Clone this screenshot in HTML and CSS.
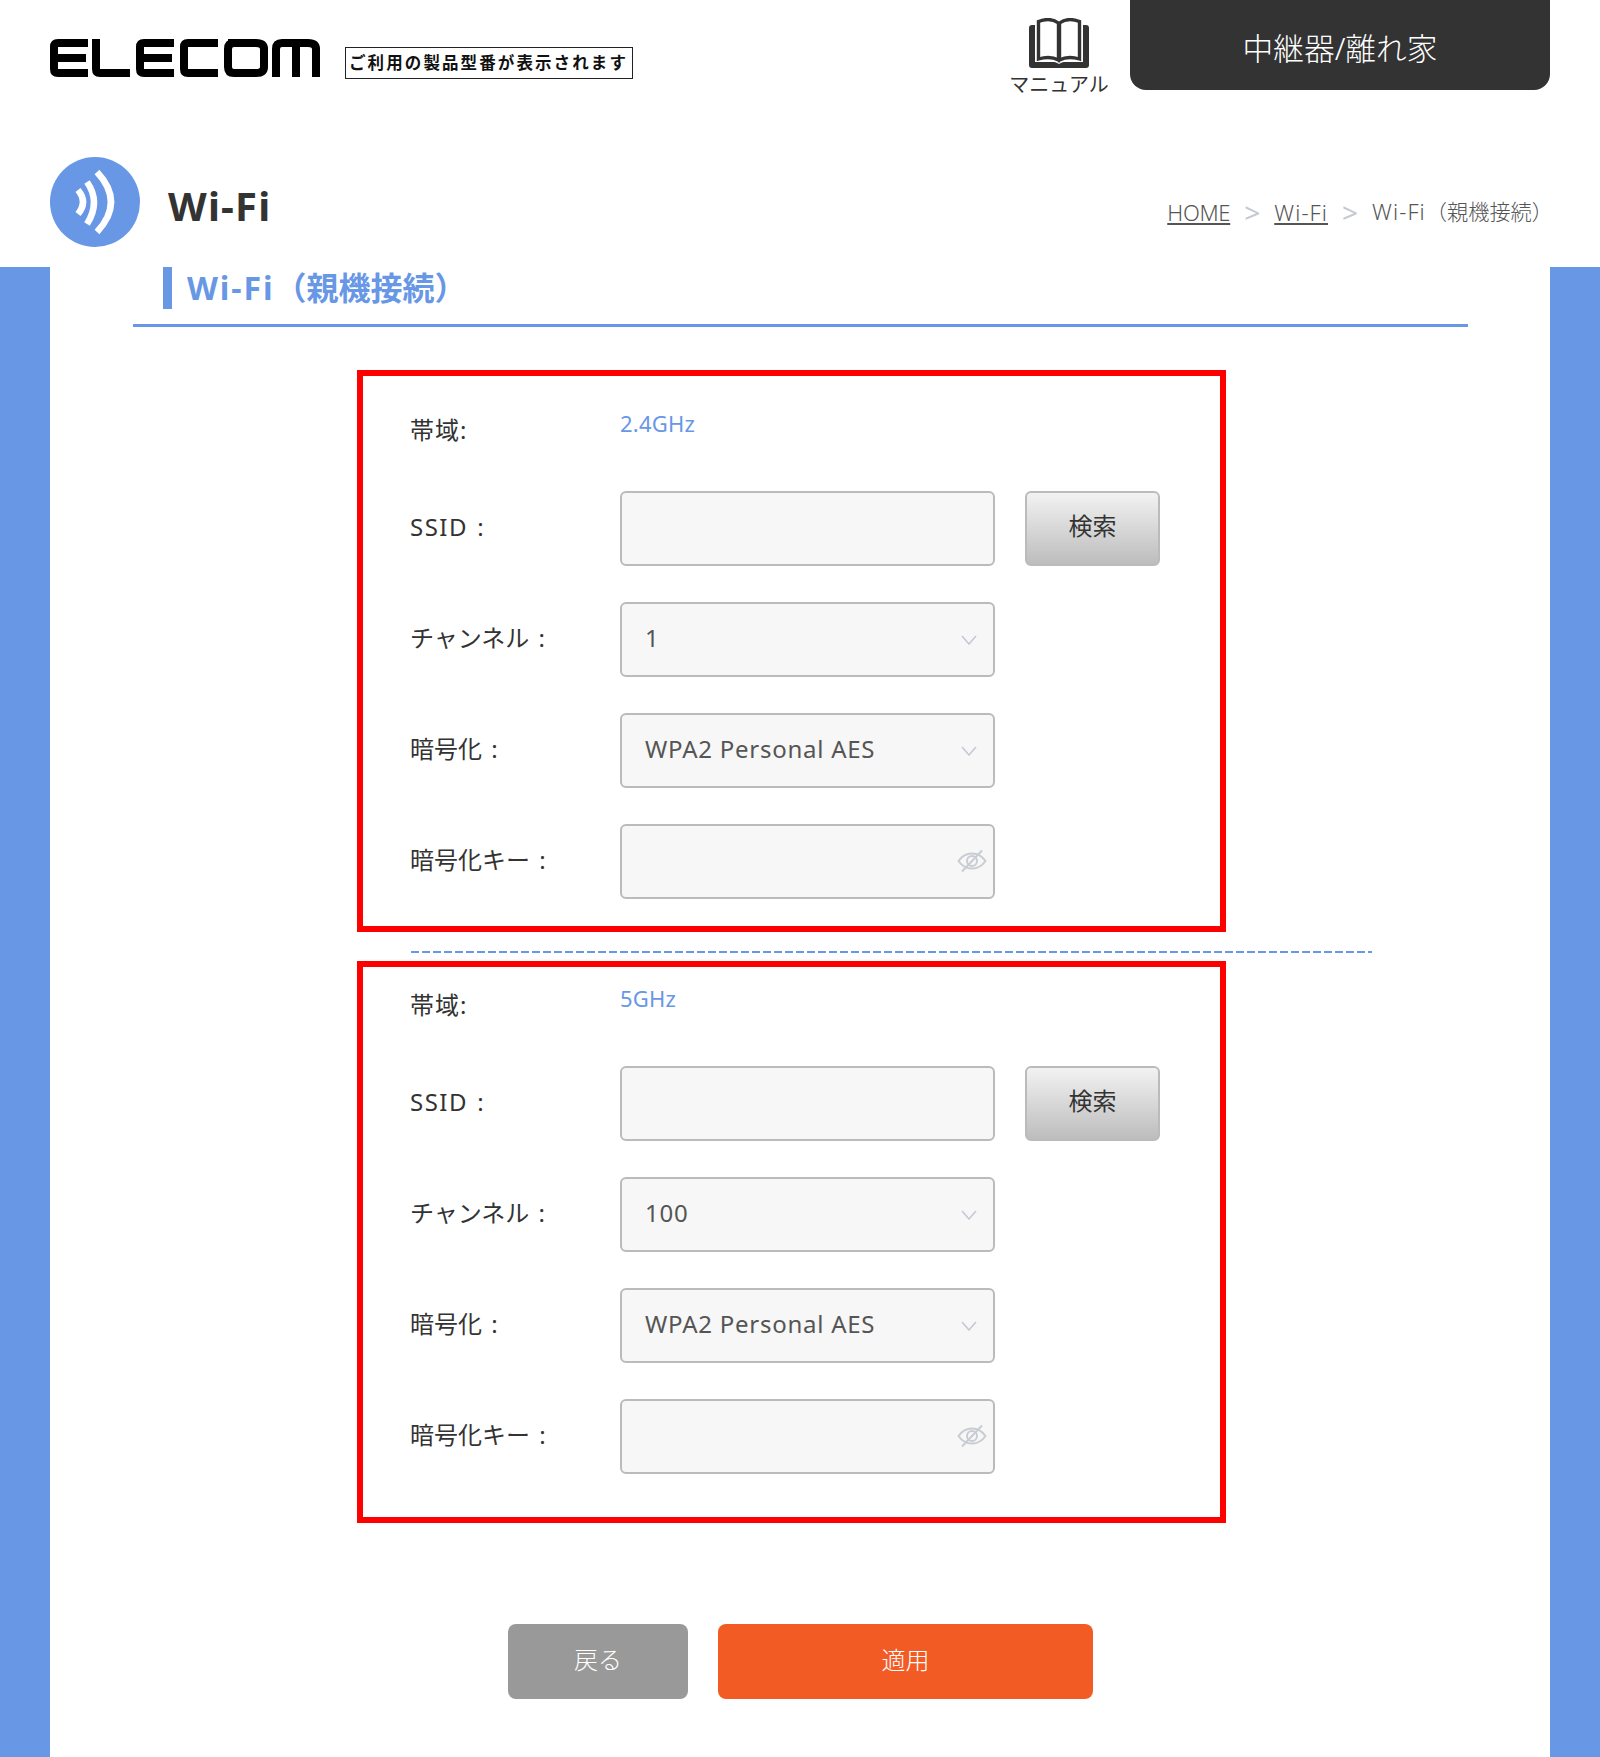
FILE: index.html
```html
<!DOCTYPE html>
<html lang="ja">
<head>
<meta charset="utf-8">
<title>Wi-Fi</title>
<link rel="stylesheet" href="styles.css">
</head>
<body>
<header class="site-header">
  <div class="brand">
    <svg class="logo" viewBox="0 0 270 38" aria-label="ELECOM">
      <g fill="none" stroke="#000" stroke-width="8">
        <path d="M38 4H8Q4 4 4 8V30Q4 34 8 34H38"/>
        <path d="M4 19H36"/>
        <path d="M46 0V30Q46 34 50 34H80"/>
        <path d="M124 4H94Q90 4 90 8V30Q90 34 94 34H124"/>
        <path d="M90 19H122"/>
        <path d="M168 4H138Q134 4 134 8V30Q134 34 138 34H168"/>
        <path d="M178 4H206Q214 4 214 10V28Q214 34 206 34H184Q178 34 178 28V10Q178 4 184 4Z"/>
        <path d="M226 38V10Q226 4 232 4H258Q266 4 266 10V38"/>
        <path d="M246 4V38"/>
      </g>
    </svg>
    <div class="model">ご利用の製品型番が表示されます</div>
  </div>
  <div class="header-right">
    <a class="manual">
      <svg class="book" viewBox="0 0 60 50">
        <path fill="#333" d="M3 7H6V44H25C27 44 28 45 30 46C32 45 33 44 35 44H54V7H57C59 7 60 8 60 10V47C60 49 59 50 57 50H3C1 50 0 49 0 47V10C0 8 1 7 3 7Z"/>
        <path fill="none" stroke="#333" stroke-width="3.4" d="M9.500 3.500C16 1 24 1 29.500 5V42C24 39 16 39 9.500 41ZM50.500 3.500C44 1 36 1 30.500 5V42C36 39 44 39 50.500 41Z"/>
      </svg>
      <span class="manual-label">マニュアル</span>
    </a>
    <div class="mode">中継器/離れ家</div>
  </div>
</header>

<section class="title-row">
  <div class="title-left">
    <svg class="wifi-icon" viewBox="0 0 90 90">
      <circle cx="45" cy="45" r="45" fill="#6897e6"/>
      <g fill="none" stroke="#fff" stroke-width="6.500">
        <path d="M28 33Q38 45 28 57"/>
        <path d="M37 25Q51 45 37 67"/>
        <path d="M47 15Q75 45 47 75"/>
      </g>
    </svg>
    <h1 class="page-title">Wi-Fi</h1>
  </div>
  <nav class="crumbs">
    <a class="crumb-link crumb-home">HOME</a><span class="crumb-sep">&gt;</span><a class="crumb-link crumb-latin">Wi-Fi</a><span class="crumb-sep">&gt;</span><span><span class="crumb-latin">Wi-Fi</span><span class="crumb-jp">（親機接続）</span></span>
  </nav>
</section>

<main class="stage">
  <div class="sheet">
    <div class="section-head">
      <h2 class="section-title"><span class="title-latin">Wi-Fi</span>（親機接続）</h2>
    </div>

    <section class="band-box">
      <div class="row row-band"><span class="label">帯域:</span><span class="band">2.4GHz</span></div>
      <div class="row"><span class="label"><span class="label-latin">SSID</span> :</span><input class="field" type="text"><button class="search" type="button">検索</button></div>
      <div class="row"><span class="label">チャンネル :</span><div class="field select">1<svg class="chev" viewBox="0 0 16 10"><path d="M1 1L8 9L15 1"/></svg></div></div>
      <div class="row"><span class="label">暗号化 :</span><div class="field select">WPA2 Personal AES<svg class="chev" viewBox="0 0 16 10"><path d="M1 1L8 9L15 1"/></svg></div></div>
      <div class="row"><span class="label">暗号化キー :</span><div class="field select"><svg class="eye" viewBox="0 0 30 24"><path d="M1.500 12C5 7 9.500 4.500 15 4.500S25 7 28.500 12C25 17 20.500 19.500 15 19.500S5 17 1.500 12Z"/><circle cx="15" cy="12" r="5"/><path d="M5 22.500L25 1.500"/></svg></div></div>
    </section>

    <div class="divider"></div>

    <section class="band-box band-box-second">
      <div class="row row-band"><span class="label">帯域:</span><span class="band">5GHz</span></div>
      <div class="row"><span class="label"><span class="label-latin">SSID</span> :</span><input class="field" type="text"><button class="search" type="button">検索</button></div>
      <div class="row"><span class="label">チャンネル :</span><div class="field select">100<svg class="chev" viewBox="0 0 16 10"><path d="M1 1L8 9L15 1"/></svg></div></div>
      <div class="row"><span class="label">暗号化 :</span><div class="field select">WPA2 Personal AES<svg class="chev" viewBox="0 0 16 10"><path d="M1 1L8 9L15 1"/></svg></div></div>
      <div class="row"><span class="label">暗号化キー :</span><div class="field select"><svg class="eye" viewBox="0 0 30 24"><path d="M1.500 12C5 7 9.500 4.500 15 4.500S25 7 28.500 12C25 17 20.500 19.500 15 19.500S5 17 1.500 12Z"/><circle cx="15" cy="12" r="5"/><path d="M5 22.500L25 1.500"/></svg></div></div>
    </section>

    <div class="actions">
      <button class="btn btn-back" type="button">戻る</button>
      <button class="btn btn-apply" type="button">適用</button>
    </div>
  </div>
</main>
</body>
</html>
```
FILE: styles.css
```css
* { box-sizing: border-box; }
html, body { margin: 0; padding: 0; }
body {
  width: 1600px;
  height: 1757px;
  overflow: hidden;
  background: #fff;
  color: #333;
  font-family: "Noto Sans", "Noto Sans CJK JP", sans-serif;
  font-weight: 300;
}

/* header */
.site-header {
  display: flex;
  justify-content: space-between;
  align-items: flex-start;
  height: 157px;
  padding: 0 50px;
}
.brand {
  display: flex;
  align-items: flex-start;
  gap: 25px;
  padding-top: 39px;
}
.logo { display: block; width: 270px; height: 38px; }
.model {
  width: 288px;
  height: 32px;
  margin-top: 8px;
  border: 1.500px solid #222;
  color: #111;
  font-family: "Noto Sans CJK JP", sans-serif;
  font-size: 16.500px;
  font-weight: 700;
  line-height: 28px;
  letter-spacing: 2.100px;
  white-space: nowrap;
  padding-left: 3px;
  overflow: hidden;
}
.header-right { display: flex; align-items: flex-start; gap: 22px; }
.manual {
  display: flex;
  flex-direction: column;
  align-items: center;
  width: 98px;
  padding-top: 18px;
}
.book { display: block; width: 60px; height: 50px; }
.manual-label {
  font-size: 20px;
  font-weight: 400;
  line-height: 28px;
  margin-top: 3px;
  white-space: nowrap;
}
.mode {
  width: 420px;
  height: 90px;
  background: #333;
  color: #fff;
  border-radius: 0 0 16px 16px;
  font-size: 30.700px;
  line-height: 96px;
  text-align: center;
}

/* page title */
.title-row {
  display: flex;
  justify-content: space-between;
  align-items: flex-start;
  height: 110px;
  padding: 0 47px 0 50px;
}
.title-left { display: flex; align-items: center; gap: 28px; }
.wifi-icon { display: block; width: 90px; height: 90px; }
.page-title {
  margin: 8px 0 0;
  font-size: 40px;
  font-weight: 700;
  line-height: 56px;
  letter-spacing: 1.200px;
  color: #333;
}
.crumbs {
  display: flex;
  align-items: center;
  padding-top: 37px;
  font-size: 22px;
  line-height: 34px;
  color: #555;
}
.crumb-link { text-decoration: underline; }
.crumb-home { letter-spacing: -0.300px; }
.crumb-latin { letter-spacing: 1.100px; }
.crumb-jp { font-size: 21.200px; }
.crumb-sep { color: #c3c8d2; margin: 0 14px; font-size: 28px; font-weight: 400; }

/* main */
.stage {
  height: 1490px;
  padding: 0 50px;
  background: #6897e6;
}
.sheet {
  height: 100%;
  background: #fff;
}
.section-head {
  margin: 0 82px 0 83px;
  height: 60px;
  border-bottom: 3px solid #6897e6;
  padding-left: 30px;
}
.section-title {
  margin: 0;
  height: 42px;
  border-left: 9px solid #6897e6;
  padding-left: 15px;
  color: #6897e6;
  font-size: 32px;
  font-weight: 700;
  line-height: 42px;
  white-space: nowrap;
}
.title-latin { letter-spacing: 1.900px; }

.band-box {
  width: 869px;
  height: 562px;
  margin: 43px 0 0 307px;
  padding: 0 47px;
  border: 6px solid #f00;
}
.band-box-second { margin-top: 0; }
.band-box-second .row-band { margin-top: 14px; }
.divider {
  width: 961px;
  height: 2px;
  margin: 19px 0 8px 361px;
  background: repeating-linear-gradient(90deg, #6897e6 0 8px, transparent 8px 11px);
}
.row {
  display: flex;
  align-items: center;
  height: 74px;
  margin-bottom: 37px;
}
.row-band {
  height: 37px;
  margin-top: 30px;
  margin-bottom: 48px;
  align-items: flex-start;
}
.label {
  width: 210px;
  flex: none;
  font-size: 24px;
  font-weight: 400;
  line-height: 34px;
  word-spacing: 3px;
  color: #333;
  margin-top: -3px;
  white-space: pre;
}
.label-latin { letter-spacing: 1.500px; }
.row-band .label { margin-top: 7px; letter-spacing: 1px; }
.band {
  margin-top: 1px;
  font-size: 22px;
  font-weight: 400;
  line-height: 32px;
  letter-spacing: 0.200px;
  color: #6897e6;
}
.field {
  flex: none;
  width: 375px;
  height: 75px;
  border: 2px solid #bbb;
  border-radius: 6px;
  background: #f7f7f7;
  padding: 0 23px;
}
.select {
  display: flex;
  align-items: center;
  justify-content: space-between;
  padding-right: 16px;
  padding-bottom: 3px;
  font-size: 24px;
  font-weight: 400;
  letter-spacing: 0.750px;
  color: #555;
}
.select .eye { margin-left: auto; }
.chev { display: block; width: 16px; height: 10px; fill: none; stroke: #c3c8d2; stroke-width: 1.500; margin-top: 5px; }
.eye { display: block; width: 30px; height: 24px; fill: none; stroke: #c9ccd3; stroke-width: 2; margin: 3px -10px 0 0; }
.search {
  flex: none;
  width: 135px;
  height: 75px;
  margin-left: 30px;
  border: 2px solid #bbb;
  border-radius: 6px;
  background: linear-gradient(#f2f2f2, #bdbdbd);
  color: #333;
  font: inherit;
  font-size: 24px;
  font-weight: 400;
  line-height: 34px;
  padding: 0 0 5px;
}

.actions {
  display: flex;
  gap: 30px;
  margin: 101px 0 0 458px;
}
.btn {
  height: 75px;
  border: 0;
  border-radius: 8px;
  color: #fff;
  font: inherit;
  font-size: 24px;
  line-height: 34px;
  padding: 0 0 3px;
}
.btn-back { width: 180px; background: #999; }
.btn-apply { width: 375px; background: #f35b25; }
```
